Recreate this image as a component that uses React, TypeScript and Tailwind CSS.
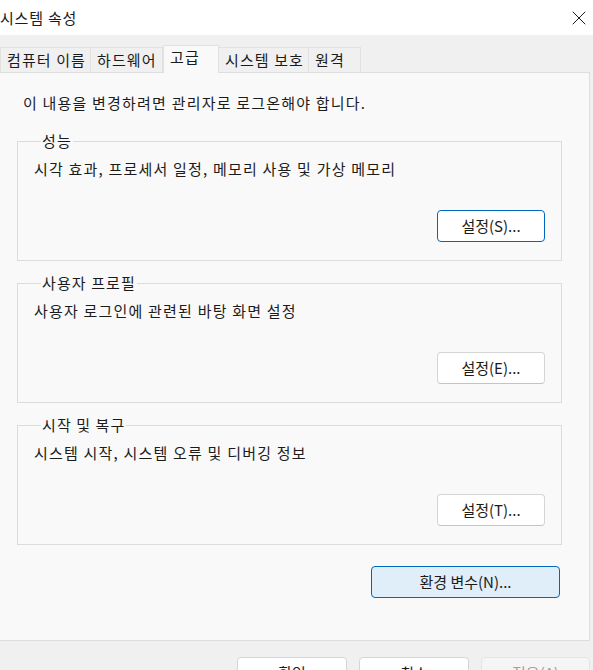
import { X } from "lucide-react";

const TABS = ["컴퓨터 이름", "하드웨어", "고급", "시스템 보호", "원격"];
const TAB_WIDTHS = ["w-[91px]", "w-[72px]", "w-[56px]", "w-[90px]", "w-[52px]"];

const GROUPS = [
  { title: "성능", desc: "시각 효과, 프로세서 일정, 메모리 사용 및 가상 메모리", button: "설정(S)...", focused: true },
  { title: "사용자 프로필", desc: "사용자 로그인에 관련된 바탕 화면 설정", button: "설정(E)...", focused: false },
  { title: "시작 및 복구", desc: "시스템 시작, 시스템 오류 및 디버깅 정보", button: "설정(T)...", focused: false },
];

function DialogButton({ label, focused }: { label: string; focused?: boolean }) {
  return (
    <button
      className={`h-[32px] w-[108px] rounded-[4px] border bg-white text-[15px] text-[#1b1b1b] ${
        focused ? "border-[#0067c0]" : "border-[#d5d5d5] border-b-[#c4c4c4]"
      }`}
    >
      {label}
    </button>
  );
}

export default function App() {
  return (
    <div
      className="h-[670px] w-[593px] overflow-hidden bg-[#f0f0f0] text-[#1b1b1b]"
      style={{ fontFamily: '"Noto Sans CJK KR", "Noto Sans", sans-serif' }}
    >
      <div className="flex h-[35px] items-center justify-between bg-white">
        <span className="text-[15px] leading-none tracking-[0.8px]">시스템 속성</span>
        <X className="mr-[2px] h-[24px] w-[24px] text-[#1b1b1b]" strokeWidth={1} />
      </div>

      <div className="mt-[10px] flex h-[27px] items-end">
        {TABS.map((tab, i) => {
          const active = i === 2;
          return (
            <div
              key={tab}
              className={`${TAB_WIDTHS[i]} flex items-center border-t border-r border-[#e1e1e1] pl-[6px] text-[15px] tracking-[1.1px] ${
                active
                  ? "relative z-10 -mb-px h-[28px] border-l bg-[#f9f9f9] pb-[4px]"
                  : "h-[25px] bg-[#f0f0f0]"
              } ${i === 0 ? "border-l" : ""}`}
            >
              {tab}
            </div>
          );
        })}
      </div>

      <div className="flex h-[569px] w-[590px] flex-col border border-l-0 border-[#dedede] bg-[#f9f9f9] pl-[17px]">
        <p className="mt-[20px] pl-[6px] text-[15px] leading-[20px] tracking-[1.2px]">
          이 내용을 변경하려면 관리자로 로그온해야 합니다.
        </p>

        <div className="mt-[18px] flex flex-col">
          {GROUPS.map((g) => (
            <fieldset
              key={g.title}
              className="mb-[12px] w-[545px] border border-[#dcdcdc] px-[16px] pb-[18px] last:mb-0"
            >
              <legend className="ml-[7px] px-[1px] text-[15px] leading-[20px] tracking-[1.1px]">
                {g.title}
              </legend>
              <p className="mt-[8px] text-[15px] leading-[20px] tracking-[1.2px]">{g.desc}</p>
              <div className="mt-[31px] flex justify-end">
                <DialogButton label={g.button} focused={g.focused} />
              </div>
            </fieldset>
          ))}
        </div>

        <div className="mt-[21px] flex w-[543px] justify-end">
          <button className="h-[32px] w-[189px] rounded-[4px] border border-[#0067c0] bg-[#e0eef9] text-[15px]">
            환경 변수(N)...
          </button>
        </div>
      </div>

      <div className="mt-[16px] flex justify-end gap-[12px] pr-[3px]">
        <button className="h-[32px] w-[110px] rounded-[4px] border border-[#d5d5d5] bg-white text-[15px]">
          확인
        </button>
        <button className="h-[32px] w-[110px] rounded-[4px] border border-[#d5d5d5] bg-white text-[15px]">
          취소
        </button>
        <button className="h-[32px] w-[109px] rounded-[4px] border border-[#e5e5e5] bg-[#f5f5f5] text-[15px] text-[#a0a0a0]">
          적용(A)
        </button>
      </div>
    </div>
  );
}
